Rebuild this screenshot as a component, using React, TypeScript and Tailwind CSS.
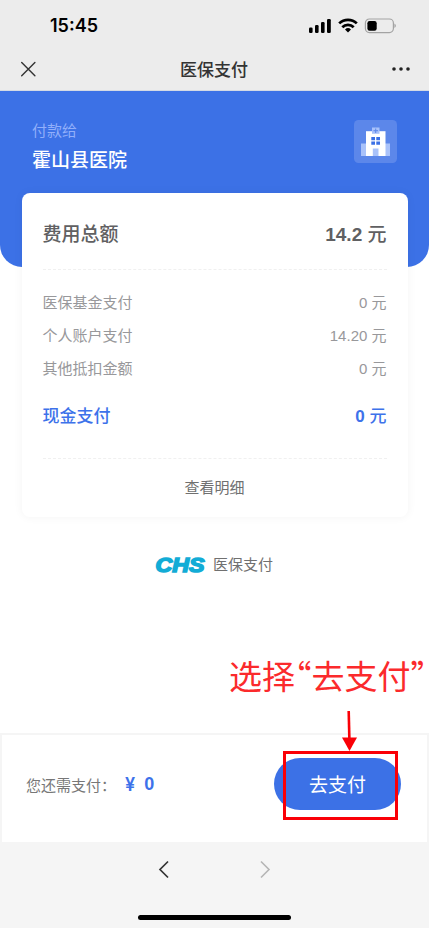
interface IFeeRow {
	label: string;
	value: string;
}

const feeRows: IFeeRow[] = [
	{ label: "医保基金支付", value: "0 元" },
	{ label: "个人账户支付", value: "14.20 元" },
	{ label: "其他抵扣金额", value: "0 元" },
];

function StatusBar() {
	return (
		<div className="flex h-[46px] items-center justify-between pt-[6px] pl-[50px] pr-[32px]">
			<span className="font-['Inter'] text-[18px] leading-[24px] font-semibold text-black">
				15:45
			</span>
			<svg width="90" height="18" viewBox="0 0 90 18">
				<g fill="#000">
					<rect x="2" y="10.5" width="3.6" height="5.5" rx="1.2" />
					<rect x="8" y="8" width="3.6" height="8" rx="1.2" />
					<rect x="14" y="5" width="3.6" height="11" rx="1.2" />
					<rect x="20" y="2" width="3.8" height="14" rx="1.2" />
				</g>
				<g fill="none" stroke="#000" strokeWidth="2.7">
					<path d="M32.2 6.4a12.5 12.5 0 0 1 17.6 0" />
					<path d="M35.3 10.3a8 8 0 0 1 11.4 0" />
				</g>
				<path d="M41 15.4l-3-3a4.4 4.4 0 0 1 6 0z" fill="#000" />
				<rect
					x="58.4"
					y="2"
					width="28"
					height="13.6"
					rx="4"
					fill="none"
					stroke="#a3a3a3"
					strokeWidth="1.2"
				/>
				<rect x="60.4" y="4" width="9.3" height="9.8" rx="2.2" fill="#000" />
				<path d="M87.4 6.6v4.4q1.5-.7 1.5-2.2t-1.5-2.2z" fill="#a3a3a3" />
			</svg>
		</div>
	);
}

function NavBar() {
	return (
		<div className="flex h-[45px] items-center justify-between border-b border-[#d5dae4] pl-[20px] pr-[18px]">
			<svg
				width="17"
				height="17"
				viewBox="0 0 17 17"
				className="mt-[2px]"
				stroke="#333"
				strokeWidth="1.4"
				strokeLinecap="round"
			>
				<path d="M1.7 1.4l13.2 13.4M14.9 1.4L1.7 14.8" />
			</svg>
			<span className="pt-[5px] text-[17px] leading-[24px] font-medium text-[#333]">医保支付</span>
			<svg width="20" height="6" viewBox="0 0 20 6" className="mt-[2px]" fill="#222">
				<circle cx="3" cy="3" r="1.8" />
				<circle cx="10" cy="3" r="1.8" />
				<circle cx="17" cy="3" r="1.8" />
			</svg>
		</div>
	);
}

function HospitalIcon() {
	return (
		<svg width="43" height="43" viewBox="0 0 43 43">
			<rect width="43" height="43" rx="4.5" fill="#5c87ea" />
			<path d="M7 23.5h29V36H7z" fill="#a9c2fa" />
			<path d="M12 11.2h19.5V36H12z" fill="#fff" />
			<path d="M18 7.5h7.5v6.3H18z" fill="#a9c2fa" />
			<path d="M21.7 8.5v4.5M19.5 10.7h4.5" stroke="#5c87ea" strokeWidth="1" />
			<path d="M17.3 17h3.7v3.2h-3.7zM22.3 17H26v3.2h-3.7zM17.3 21.6h3.7v3.2h-3.7zM22.3 21.6H26v3.2h-3.7z" fill="#3b70e5" />
			<path d="M18.8 28.5h5.7V36h-5.7z" fill="#a9c2fa" />
		</svg>
	);
}

function FeeCard() {
	return (
		<div className="mx-[21.5px] h-[324px] rounded-[8px] bg-white px-[21px] shadow-[0_0_10px_rgba(0,0,0,0.05)]">
			<div className="flex h-[77px] items-center justify-between border-b border-dashed border-[#f0f0f0] pt-[8px] text-[19px] font-medium text-[#606062]">
				<span>费用总额</span>
				<span>
					<b>14.2</b> 元
				</span>
			</div>
			<div className="pt-[17px]">
				{feeRows.map((row) => (
					<div
						key={row.label}
						className="flex h-[33px] items-center justify-between text-[15px] text-[#98989b]"
					>
						<span>{row.label}</span>
						<span>{row.value}</span>
					</div>
				))}
			</div>
			<div className="flex h-[60px] items-center justify-between pt-[2px] text-[17px] font-medium text-[#3d72ea]">
				<span>现金支付</span>
				<span>
					<b>0</b> 元
				</span>
			</div>
			<div className="mt-[12px] flex h-[60px] items-center justify-center border-t border-dashed border-[#f0f0f0] text-[15px] text-[#707070]">
				查看明细
			</div>
		</div>
	);
}

function Brand() {
	return (
		<div className="mt-[36px] flex h-[24px] items-center justify-center gap-[7px] pr-[2px]">
			<svg width="52" height="24" viewBox="0 0 52 24" className="overflow-visible">
				<text
					x="1.5"
					y="19.4"
					textLength="49"
					lengthAdjust="spacingAndGlyphs"
					fill="#12acd6"
					stroke="#12acd6"
					strokeWidth="1.5"
					className="font-['Liberation_Sans'] text-[19.5px] font-bold italic"
				>
					CHS
				</text>
			</svg>
			<span className="pt-[1px] text-[15px] text-[#707070]">医保支付</span>
		</div>
	);
}

function PayBar() {
	return (
		<div className="relative flex h-[111px] items-center justify-between border-2 border-[#f5f5f5] bg-white pl-[24px] pr-[26px]">
			<div className="mb-[8px] flex items-center">
				<span className="w-[99px] pt-[3px] text-[15px] text-[#777]">您还需支付：</span>
				<span className="flex gap-[9px] text-[18px] font-bold text-[#3d72ea]">
					<span className="font-['Inter'] font-semibold">¥</span>
					<span>0</span>
				</span>
			</div>
			<button
				type="button"
				className="mb-[9px] h-[52px] w-[127px] rounded-full bg-[#3c71e6] pt-[4px] text-[19px] text-white"
			>
				去支付
			</button>
			{/* callout around the pay button */}
			<div className="absolute top-[16px] left-[281px] h-[69px] w-[115px] border-3 border-[#fa0007]" />
			<svg className="absolute top-[-25px] left-[338px]" width="20" height="42" viewBox="0 0 20 42">
				<path d="M8.7 1l.7 29" stroke="#fa0007" strokeWidth="2.6" />
				<path d="M2 27.5h15L9.5 41z" fill="#fa0007" />
			</svg>
		</div>
	);
}

function BottomNav() {
	return (
		<div className="flex h-[84px] flex-col items-center justify-between bg-[#f5f5f5] pt-[16px] pb-[8px]">
			<div className="flex gap-[89px]">
				<svg width="12" height="19" viewBox="0 0 12 19" fill="none" stroke="#333" strokeWidth="1.7">
					<path d="M10 1.5L2 9.5l8 8" />
				</svg>
				<svg width="12" height="19" viewBox="0 0 12 19" fill="none" stroke="#b5b5b5" strokeWidth="1.6">
					<path d="M2 1.5l8 8-8 8" />
				</svg>
			</div>
			<div className="h-[5px] w-[153px] rounded-full bg-black" />
		</div>
	);
}

export default function App() {
	return (
		<div className="flex h-[928px] w-full flex-col overflow-hidden bg-white font-['Liberation_Sans','Noto_Sans_CJK_SC',sans-serif]">
			<header className="bg-[#ececec]">
				<StatusBar />
				<NavBar />
			</header>
			<main className="flex flex-1 flex-col">
				<div className="h-[176px] rounded-b-[22px] bg-[#3c71e6]">
					<div className="flex justify-between pt-[29px] pl-[32px] pr-[32px]">
						<div>
							<div className="text-[15px] leading-[22px] text-[#91affa]">付款给</div>
							<div className="mt-[5px] text-[19px] leading-[28px] font-medium text-white">霍山县医院</div>
						</div>
						<HospitalIcon />
					</div>
				</div>
				<div className="-mt-[74px]">
					<FeeCard />
				</div>
				<Brand />
				<div className="mt-[74px] pr-[2px] text-right font-['Noto_Sans_CJK_SC',sans-serif] text-[33px] leading-[48px] whitespace-nowrap text-[#fb2a2c] [font-feature-settings:'halt']">
					选择“去支付”
				</div>
			</main>
			<PayBar />
			<BottomNav />
		</div>
	);
}
